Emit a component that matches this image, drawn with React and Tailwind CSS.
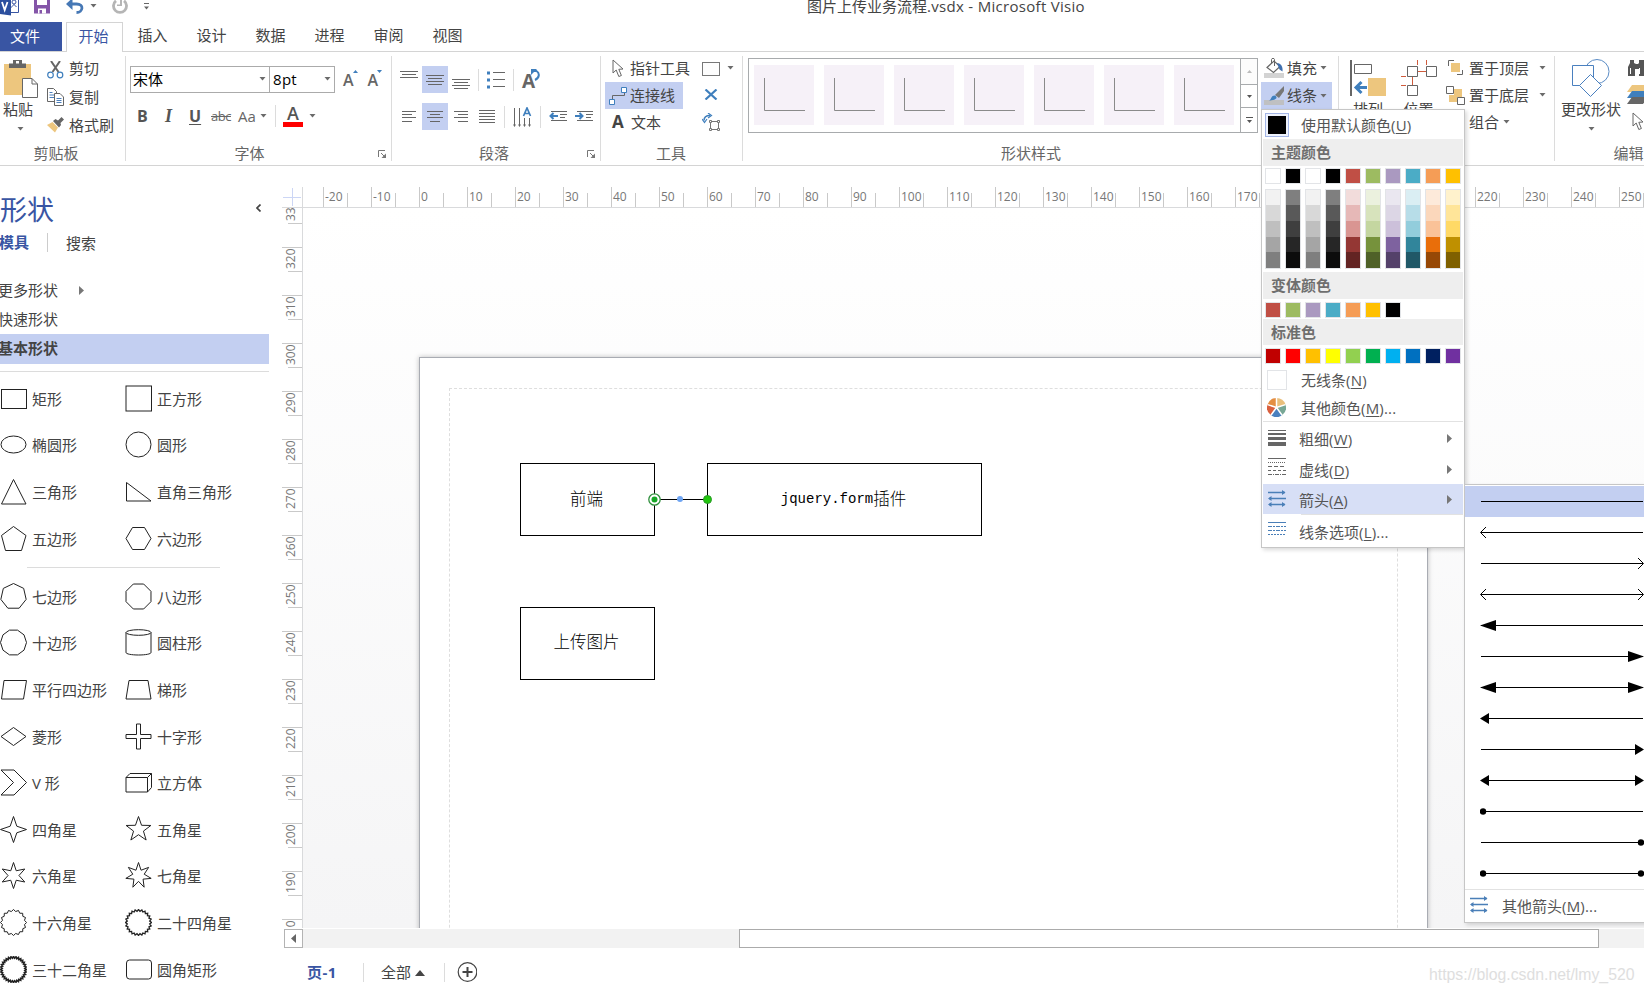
/**
 * App.jsx
 * Visio-style drawing window: ribbon, shapes pane, rulers, canvas and the line colour menu.
 */

const TABS = ['插入', '设计', '数据', '进程', '审阅', '视图'];

const THEME = ['#ffffff', '#000000', '#ffffff', '#000000', '#c04f45', '#9dbb61', '#aa99c0', '#4bacc6', '#f59d56', '#ffc000'];

const SHADES = [
  ['#f2f2f2', '#d8d8d8', '#bfbfbf', '#a5a5a5', '#7f7f7f'],
  ['#7f7f7f', '#595959', '#3f3f3f', '#262626', '#0c0c0c'],
  ['#f2f2f2', '#d8d8d8', '#bfbfbf', '#a5a5a5', '#7f7f7f'],
  ['#7f7f7f', '#595959', '#3f3f3f', '#262626', '#0c0c0c'],
  ['#f2dcdb', '#e6b8b7', '#d99592', '#943734', '#632423'],
  ['#ebf1de', '#d7e3bc', '#c4d6a0', '#76923c', '#4f6128'],
  ['#eae7f0', '#dcd6e5', '#ccc0da', '#7e629f', '#54416a'],
  ['#daeef3', '#b7dde8', '#92cddc', '#31859b', '#205867'],
  ['#fdeada', '#fbd7bb', '#fac298', '#e96e0a', '#974806'],
  ['#fff2cc', '#ffe599', '#ffd966', '#bf9000', '#7f6000'],
];

const VARIANT = ['#c04f45', '#9dbb61', '#aa99c0', '#4bacc6', '#f59d56', '#ffc000', '#000000'];

const STANDARD = ['#c00000', '#ff0000', '#ffc000', '#ffff00', '#92d050', '#00b050', '#00b0f0', '#0070c0', '#002060', '#7030a0'];

// start / end caps of every preset in the arrow submenu
const ARROWS = [
  ['', ''], ['open', ''], ['', 'open'], ['open', 'open'],
  ['long', ''], ['', 'long'], ['long', 'long'],
  ['short', ''], ['', 'short'], ['short', 'short'],
  ['dot', ''], ['', 'dot'], ['dot', 'dot'],
];

function ring(n, { r = 12.5, inner = 0, turn = 0 } = {}) {
  const count = inner ? n * 2 : n;
  return Array.from({ length: count }, (_, i) => {
    const a = (Math.PI * 2 * i) / count - Math.PI / 2 + (turn * Math.PI) / 180;
    const rad = inner && i % 2 ? r * inner : r;
    return `${(13.5 + rad * Math.cos(a)).toFixed(2)},${(13.5 + rad * Math.sin(a)).toFixed(2)}`;
  }).join(' ');
}

const SHAPES_TOP = [
  ['矩形', <rect x="1.5" y="4.5" width="25" height="19" />],
  ['正方形', <rect x="1" y="1" width="25.5" height="25" />],
  ['椭圆形', <ellipse cx="13.5" cy="13.5" rx="12.5" ry="8.5" />],
  ['圆形', <circle cx="13.5" cy="13.5" r="12.5" />],
  ['三角形', <path d="M13.5 1.5 26 26H1.5z" />],
  ['直角三角形', <path d="M1.5 4.5v18.5h24.5z" />],
  ['五边形', <path d="M13.5 1.5 26 10.5 21.5 25.5h-16L1.5 10.5z" />],
  ['六边形', <path d="M7.5 2.5h12L26 13.5l-6.5 11h-12L1 13.5z" />],
];

const SHAPES_BOTTOM = [
  ['七边形', <polygon points={ring(7, { r: 13 })} />],
  ['八边形', <polygon points={ring(8, { r: 13.5, turn: 22.5 })} />],
  ['十边形', <polygon points={ring(10, { r: 13, turn: 18 })} />],
  ['圆柱形', <><ellipse cx="13.5" cy="3.5" rx="12.5" ry="2.8" /><path d="M1 3.5v20c0 1.500 5.500 2.500 12.500 2.500S26 25 26 23.500v-20" /></>],
  ['平行四边形', <path d="M4 4.500h22.500l-3 18.500h-22z" />],
  ['梯形', <path d="M4 4.500h19L26 23H1z" />],
  ['菱形', <path d="M1 13.500 13.500 4.500 26 13.500 13.500 22.500z" />],
  ['十字形', <path d="M11.500 1h4v10.500H26v4H15.500V26h-4V15.500H1v-4h10.500z" />],
  ['V 形', <path d="M1 1h13l12.500 12.500L14 26H1l12.500-12.500z" />],
  ['立方体', <path d="M1 8.500h21.500v14.500H1zM1 8.500 5 4.500h21.500L22.500 8.500M26.500 4.500v14l-4 4.500" />],
  ['四角星', <polygon points={ring(4, { r: 13, inner: 0.36 })} />],
  ['五角星', <polygon points={ring(5, { r: 13, inner: 0.4 })} />],
  ['六角星', <polygon points={ring(6, { r: 13, inner: 0.42 })} />],
  ['七角星', <polygon points={ring(7, { r: 13, inner: 0.45 })} />],
  ['十六角星', <polygon points={ring(16, { r: 13, inner: 0.86 })} />],
  ['二十四角星', <polygon points={ring(24, { r: 13, inner: 0.87 })} strokeWidth="1.300" />],
  ['三十二角星', <polygon points={ring(32, { r: 13, inner: 0.87 })} strokeWidth="1.600" />],
  ['圆角矩形', <rect x="1.500" y="4" width="25" height="19" rx="3" />],
];

function Icon({ w, h, className = '', children }) {
  return (
    <svg width={w} height={h} viewBox={`0 0 ${w} ${h}`} fill="none" className={`shrink-0 ${className}`}>
      {children}
    </svg>
  );
}

function Caret({ className = '' }) {
  return <Icon w={7} h={4} className={className}><path d="M.5 0h6L3.500 3.500z" fill="#6b6b6b" /></Icon>;
}

function Cursor() {
  return (
    <Icon w={12} h={19}>
      <path d="M1 1v13l3.200-3 2.600 6.500 2.600-1L6.800 10.300 11 10z" fill="#fff" stroke="#666" />
    </Icon>
  );
}

// horizontal text-alignment glyphs: list of [x1, x2, y]
function Lines({ w, h, rows }) {
  return (
    <Icon w={w} h={h}>
      {rows.map(([a, b, y]) => <path key={y} d={`M${a} ${y + 0.5}H${b}`} stroke="#666" />)}
    </Icon>
  );
}

function Group({ label, width, launcher, last, children }) {
  return (
    <section className={`flex h-[105px] shrink-0 flex-col ${width} ${last ? '' : 'border-r border-[#dcdcdc]'}`}>
      <div className="flex h-[84px]">{children}</div>
      <div className="flex h-[21px] items-center pt-[5px] text-[#666]">
        <span className="flex-1 text-center">{label}</span>
        {launcher && (
          <Icon w={9} h={8} className="-ml-[9px] mr-1 mt-[2px]">
            <path d="M.5 7V.5H7" stroke="#777" />
            <path d="M3 3l4 4" stroke="#777" />
            <path d="M8 3.500V8H3.500z" fill="#777" />
          </Icon>
        )}
      </div>
    </section>
  );
}

function Sep() {
  return <div className="h-[22px] w-px shrink-0 bg-[#dcdcdc]" />;
}

function TitleBar() {
  return (
    <header className="flex h-[22px] shrink-0 items-start">
      <Icon w={20} h={16}>
        <path d="M9 0v12.500h9.500V0" stroke="#3955a3" />
        <path d="M10 8.500l4-4 2.500 2.500M14 4.500V2" stroke="#3955a3" />
        <circle cx="14" cy="2" r="2" stroke="#3955a3" fill="#fff" />
        <path d="M0 0h11v15.500L0 14z" fill="#2b4f9e" />
        <path d="M2 2l2.700 8L7.500 2" stroke="#fff" strokeWidth="1.800" />
      </Icon>
      <Icon w={16} h={14} className="ml-[14px]">
        <path d="M0 0h16v13.500H0z" fill="#8455a8" />
        <path d="M3 0h10v5H3zM4 8.500h8v5H4z" fill="#fff" />
        <path d="M5.500 10h2.500v3.500H5.500z" fill="#8455a8" />
      </Icon>
      <Icon w={18} h={14} className="ml-4">
        <path d="M3 4h7.500c8 0 6.500 8.500 0 8.500" stroke="#4678b5" strokeWidth="2.800" />
        <path d="M0 4 6.500-2v12z" fill="#4678b5" />
      </Icon>
      <Caret className="ml-[6px] mt-1" />
      <Icon w={16} h={14} className="ml-[15px]">
        <path d="M4 .8a6.500 6.500 0 1 0 8 0" stroke="#b5b5b5" strokeWidth="2.800" />
        <path d="M8 0h2v6H5V4.500h3z" fill="#b5b5b5" />
      </Icon>
      <Icon w={5} h={7} className="ml-4 mt-[3px]">
        <path d="M0 .5h5" stroke="#666" />
        <path d="M0 3.500h5L2.500 6.500z" fill="#666" />
      </Icon>
      <span className="-mt-[3px] ml-[658px] whitespace-nowrap">
        图片上传业务流程<span className="tracking-[0.300px]">.vsdx - Microsoft Visio</span>
      </span>
    </header>
  );
}

function TabStrip() {
  return (
    <nav className="flex h-[30px] shrink-0 border-b border-[#d4d4d4]">
      <div className="flex w-[62px] items-center bg-[#3955a3] pb-px pl-[10px] text-white">文件</div>
      <div className="-mb-px ml-1 flex w-[57px] items-center justify-center border border-b-0 border-[#d4d4d4] bg-white pb-[4px] pr-[2px] text-[#3955a3]">
        开始
      </div>
      {TABS.map(t => (
        <div key={t} className="flex w-[59px] items-center justify-center pb-[3px]">{t}</div>
      ))}
    </nav>
  );
}

function ClipboardGroup() {
  return (
    <Group label={<span className="mr-[13px]">剪贴板</span>} width="w-[126px]">
      <div className="flex w-[47px] flex-col">
        <Icon w={36} h={40} className="ml-[3px] mt-[3px]">
          <path d="M1 5h27v31H1z" fill="#edc67e" />
          <path d="M6 4.500h4V1h9v3.500h4V9H6z" fill="#666" />
          <path d="M13 2h3v2.500h-3z" fill="#fff" />
          <path d="M19.500 19.500h9.500l5.500 5.500v13.500h-15z" fill="#fff" stroke="#666" />
          <path d="M29 19.500V25h5.500" stroke="#666" />
        </Icon>
        <span className="ml-[3px] mt-[3px] leading-[15px]">粘贴</span>
        <Caret className="ml-[17px] mt-[10px]" />
      </div>
      <div className="flex flex-col">
        <div className="flex h-[27px] items-center gap-[5px]">
          <Icon w={17} h={18}>
            <path d="M4 0 11.500 11M13 0 5.500 11" stroke="#666" strokeWidth="2" />
            <circle cx="3.500" cy="14" r="2.800" stroke="#3f7fbd" strokeWidth="1.200" />
            <circle cx="13" cy="14" r="2.800" stroke="#3f7fbd" strokeWidth="1.200" />
          </Icon>
          <span className="-mt-[3px]">剪切</span>
        </div>
        <div className="flex h-[28px] items-center gap-[5px]">
          <Icon w={17} h={18}>
            <path d="M.5.5h6l3 3v10h-9z" fill="#fff" stroke="#666" />
            <path d="M2.500 4.500h3M2.500 7h5M2.500 9.500h5" stroke="#4a7ebb" />
            <path d="M7.500 5.500h5.500l3.500 3.500v8.500h-9z" fill="#fff" stroke="#666" />
            <path d="M9.500 10.500h5M9.500 12.500h5M9.500 14.500h5" stroke="#4a7ebb" />
          </Icon>
          <span className="-mt-px">复制</span>
        </div>
        <div className="flex h-[28px] items-center gap-[5px]">
          <Icon w={17} h={16}>
            <path d="M0 8l5.500-3L11 10.500 8 15.500z" fill="#edc67e" />
            <path d="M6 4l2.500-2 2.500 1.500L14.500 0 17 2.500 13.500 6l.5 2-2 2.500z" fill="#666" />
          </Icon>
          <span>格式刷</span>
        </div>
      </div>
    </Group>
  );
}

function FontGroup() {
  return (
    <Group label={<span className="mr-[14px]">字体</span>} width="w-[266px]" launcher>
      <div className="flex w-full flex-col">
        <div className="flex h-[37px] items-center pl-1 pt-[9px] text-black">
          <div className="flex h-[27px] w-[140px] items-center justify-between border border-[#ababab] pl-[2px] pr-[3px]">
            宋体<Caret />
          </div>
          <div className="-ml-px flex h-[27px] w-[66px] items-center justify-between border border-[#ababab] pl-[3px] pr-[3px]">
            <span className="tracking-[0.300px]">8pt</span><Caret />
          </div>
          <div className="ml-2 flex items-start text-[16px] font-semibold text-[#666]">
            <span className="pt-[2px] leading-[16px]">A</span>
            <Icon w={5} h={3} className="-ml-px"><path d="M0 3h5L2.500 0z" fill="#3f7fbd" /></Icon>
          </div>
          <div className="ml-[10px] flex items-start text-[16px] font-semibold text-[#666]">
            <span className="pt-[2px] leading-[16px]">A</span>
            <Icon w={5} h={3} className="-ml-px"><path d="M0 0h5L2.500 3z" fill="#3f7fbd" /></Icon>
          </div>
        </div>
        <div className="flex h-[46px] items-center text-[#555]">
          <b className="ml-[11px] w-[28px] text-[16px]">B</b>
          <b className="w-6 font-['Liberation_Serif',serif] text-[18px] italic">I</b>
          <b className="w-[22px] text-[16px] underline underline-offset-2">U</b>
          <span className="w-[27px] text-[13px] tracking-[-0.500px] text-[#666] line-through">abc</span>
          <span className="text-[#666]">Aa</span>
          <Caret className="ml-1" />
          <div className="ml-2"><Sep /></div>
          <div className="ml-[7px] flex w-5 flex-col items-center text-[18px] font-semibold">
            <span className="leading-[17px]">A</span>
            <div className="h-[5px] w-5 bg-[#f00]" />
          </div>
          <Caret className="ml-[6px]" />
        </div>
      </div>
    </Group>
  );
}

function ParagraphGroup() {
  return (
    <Group label="段落" width="w-[209px]" launcher>
      <div className="flex w-full flex-col pl-1 pt-[10px]">
        <div className="flex h-[27px] items-center">
          <div className="flex w-[26px] justify-center pb-[11px]"><Lines w={18} h={7} rows={[[0, 18, 0], [2, 16, 3], [0, 18, 6]]} /></div>
          <div className="flex h-[27px] w-[26px] items-center justify-center bg-[#c3cff1]">
            <Lines w={18} h={10} rows={[[0, 18, 0], [2, 16, 3], [0, 18, 6], [2, 16, 9]]} />
          </div>
          <div className="flex w-[26px] justify-center pt-[8px]"><Lines w={18} h={10} rows={[[0, 18, 0], [2, 16, 3], [0, 18, 6], [2, 16, 9]]} /></div>
          <div className="ml-1"><Sep /></div>
          <Icon w={18} h={18} className="ml-2">
            <path d="M0 .500h3v3H0zM0 7.500h3v3H0zM0 14.500h3v3H0z" fill="#3f7fbd" />
            <path d="M6 1.500h12M6 8.500h12M6 15.500h12" stroke="#666" />
          </Icon>
          <div className="ml-2"><Sep /></div>
          <div className="ml-2 flex items-start">
            <b className="pt-[4px] text-[19px] leading-[17px] text-[#666]">A</b>
            <Icon w={9} h={12} className="-ml-[4px]">
              <path d="M2 2h3.500C9 4 8.500 9 4 11" stroke="#3f7fbd" strokeWidth="2" />
              <path d="M0 0h6L0 6z" fill="#3f7fbd" />
            </Icon>
          </div>
        </div>
        <div className="mt-[10px] flex h-[27px] items-center">
          <div className="flex w-[26px] justify-center"><Lines w={14} h={11} rows={[[0, 14, 0], [0, 10, 3], [0, 14, 6], [0, 10, 10]]} /></div>
          <div className="flex h-[27px] w-[26px] items-center justify-center bg-[#c3cff1]">
            <Lines w={16} h={11} rows={[[0, 16, 0], [3, 13, 3], [0, 16, 6], [3, 13, 10]]} />
          </div>
          <div className="flex w-[26px] justify-center"><Lines w={14} h={11} rows={[[0, 14, 0], [4, 14, 3], [0, 14, 6], [4, 14, 10]]} /></div>
          <div className="flex w-[26px] justify-center"><Lines w={16} h={13} rows={[[0, 16, 0], [0, 16, 3], [0, 16, 6], [0, 16, 9], [0, 16, 12]]} /></div>
          <div className="ml-1"><Sep /></div>
          <Icon w={19} h={20} className="ml-2">
            <path d="M1.500 1v18M6.500 1v18M11.500 11v8M16.500 11v8" stroke="#666" />
            <path d="M0 17.500h3L1.500 20zM5 17.500h3L6.500 20zM10 17.500h3L11.500 20zM15 17.500h3L16.500 20z" fill="#666" />
            <path d="M10.500 9 14 1l3.500 8M12 6.500h4" stroke="#3f7fbd" strokeWidth="1.700" />
          </Icon>
          <div className="ml-2"><Sep /></div>
          <Icon w={18} h={11} className="ml-2">
            <path d="M2 .500h16M11 3.500h7M11 6.500h5M2 9.500h16" stroke="#666" />
            <path d="M1 5h8" stroke="#3f7fbd" strokeWidth="2" />
            <path d="M4.500 2 1.500 5l3 3" stroke="#3f7fbd" strokeWidth="2" />
          </Icon>
          <Icon w={18} h={11} className="ml-2">
            <path d="M2 .500h16M11 3.500h7M11 6.500h5M2 9.500h16" stroke="#666" />
            <path d="M0 5h8" stroke="#3f7fbd" strokeWidth="2" />
            <path d="M4.500 2 7.500 5l-3 3" stroke="#3f7fbd" strokeWidth="2" />
          </Icon>
        </div>
      </div>
    </Group>
  );
}

function ToolsGroup() {
  return (
    <Group label={<span className="mr-px">工具</span>} width="w-[142px]">
      <div className="-mt-px ml-1 flex w-[78px] flex-col whitespace-nowrap">
        <div className="flex h-[27px] items-center gap-[6px] pl-[7px]"><Cursor /><span className="-mt-[2px]">指针工具</span></div>
        <div className="flex h-[27px] items-center gap-[3px] bg-[#c3cff1] pl-1">
          <Icon w={18} h={18}>
            <path d="M3.500 12V8.500h12V5" stroke="#666" />
            <path d="M12.500.5h5v5h-5zM.5 12.500h5v5h-5z" fill="#fff" stroke="#3f7fbd" />
          </Icon>
          <span className="-mt-[2px]">连接线</span>
        </div>
        <div className="flex h-[27px] items-center pb-[2px] pl-[7px]">
          <b className="w-[19px] text-[17px]">A</b>文本
        </div>
      </div>
      <div className="-mt-px flex w-[50px] flex-col pl-[19px]">
        <div className="flex h-[27px] items-center">
          <Icon w={18} h={14}><rect x=".5" y=".5" width="17" height="13" fill="#fdfdfd" stroke="#777" /></Icon>
          <Caret className="-mt-[2px] ml-[7px]" />
        </div>
        <div className="flex h-[27px] items-center pb-[2px] pl-[2px]">
          <Icon w={14} h={11}><path d="M1.500.5 12.500 10.500M12.500.5 1.500 10.500" stroke="#3f7fbd" strokeWidth="2.200" /></Icon>
        </div>
        <div className="flex h-[27px] items-center pb-[2px]">
          <Icon w={18} h={18}>
            <path d="M2 7.500C2 4.500 4 2.500 8 2.500" stroke="#3f7fbd" strokeWidth="1.500" />
            <path d="M6 0l3.500 2.500L6 5M0 6l2.500 3.500L5 6" stroke="#3f7fbd" strokeWidth="1.200" />
            <path d="M8.500 8.500h8v8h-8z" stroke="#777" />
            <path d="M7.500 7.500h2v2h-2zM15.500 7.500h2v2h-2zM7.500 15.500h2v2h-2zM15.500 15.500h2v2h-2z" fill="#fff" stroke="#777" />
          </Icon>
        </div>
      </div>
    </Group>
  );
}

function StylesGroup() {
  return (
    <Group label={<span className="mr-[19px]">形状样式</span>} width="w-[596px]">
      <div className="ml-[5px] mt-[2px] flex h-[75px] w-[510px] border border-[#a8abad]">
        <div className="flex flex-1 gap-[10px] pl-[5px] pt-[6px]">
          {Array.from({ length: 7 }, (_, i) => (
            <div key={i} className="h-[60px] w-[60px] bg-[#f6f1f8] pl-[10px] pt-[13px]">
              <Icon w={41} h={33}><path d="M.5 0v32.500H41" stroke="#8a8a8a" /></Icon>
            </div>
          ))}
        </div>
        <div className="flex w-[17px] flex-col border-l border-[#a8abad]">
          <div className="flex h-[25px] items-center justify-center bg-[#fcfcfc]">
            <Icon w={5} h={3}><path d="M0 3h5L2.500 0z" fill="#bbb" /></Icon>
          </div>
          <div className="flex h-[24px] items-center justify-center border-y border-[#a8abad]">
            <Icon w={5} h={3}><path d="M0 0h5L2.500 3z" fill="#555" /></Icon>
          </div>
          <div className="flex h-[24px] items-center justify-center">
            <Icon w={7} h={7}><path d="M0 .5h7" stroke="#555" /><path d="M1 3h5L3.500 6z" fill="#555" /></Icon>
          </div>
        </div>
      </div>
      <div className="-mt-px ml-[3px] flex w-[71px] flex-col">
        <div className="flex h-[27px] items-center pb-px pl-[3px]">
          <Icon w={20} h={20}>
            <path d="M0 15h20v5H0z" fill="#d3d3d3" />
            <path d="M3 9.500 10 3l6 5.500-6.500 6z" fill="#fff" stroke="#666" strokeWidth="1.200" />
            <path d="M7.500 6V1.500c0-1.500 3-1.500 3 0V8" stroke="#666" />
            <path d="M13 5c4 0 6 4 5.500 8.500l-3-2z" fill="#3f6fae" />
          </Icon>
          <span className="-mt-px ml-[3px]">填充</span><Caret className="ml-[3px]" />
        </div>
        <div className="flex h-[27px] items-center bg-[#c3cff1] pl-[3px]">
          <Icon w={20} h={19}>
            <path d="M0 14h20v5H0z" fill="#bfc0c2" />
            <path d="M20 0v5l-5 7-4-3z" fill="#777" />
            <path d="M4 14.500c4 0 2.500-5 6.500-5 3 1 4 5-6.500 5z" fill="#3f7fbd" />
          </Icon>
          <span className="-mt-[2px] ml-[3px]">线条</span><Caret className="ml-[3px]" />
        </div>
      </div>
    </Group>
  );
}

function ArrangeGroup() {
  return (
    <Group label="" width="w-[216px]">
      <div className="flex w-[50px] flex-col items-center pt-1">
        <Icon w={36} h={37} className="mr-[-8px]">
          <path d="M1 0v36" stroke="#666" strokeWidth="2" />
          <path d="M4.500 4.500h17v9h-17z" stroke="#666" />
          <path d="M18 18h18v18H18z" fill="#edc67e" />
          <path d="M6 27.500h11" stroke="#3f7fbd" strokeWidth="3" />
          <path d="M11.500 22 6 27.500 11.500 33" stroke="#3f7fbd" strokeWidth="3" />
        </Icon>
        <span className="mr-[-8px] mt-[5px] leading-[15px]">排列</span>
      </div>
      <div className="flex w-[57px] flex-col items-center pt-1">
        <Icon w={36} h={37} className="mr-[-2px]">
          <path d="M16.500 0v5M25.500 0v5M16 11.500h10M0 16.500h5M0 25.500h5M11.500 17v9" stroke="#cf5b3c" />
          <path d="M6.500 6.500h10v10h-10zM25.500 6.500h10v10h-10zM6.500 25.500h10v10h-10z" fill="#fff" stroke="#666" />
        </Icon>
        <span className="mr-[-2px] mt-[5px] leading-[15px]">位置</span>
      </div>
      <div className="-mt-px flex flex-col">
        <div className="flex h-[27px] items-center pb-[2px]">
          <Icon w={19} h={16} className="ml-[2px]">
            <path d="M3 3h9v9H3z" fill="#edc67e" />
            <path d="M.5 6V.5H6M14.500 10v4.500H9" stroke="#666" />
          </Icon>
          <span className="ml-[2px] w-[70px]">置于顶层</span><Caret />
        </div>
        <div className="flex h-[27px] items-center">
          <Icon w={19} h={19}>
            <path d="M8 3h8v8H8zM3 9h8v7H3z" fill="#edc67e" />
            <path d="M.5.500h7v7h-7zM11.500 11.500h7v7h-7z" fill="#fff" stroke="#666" />
          </Icon>
          <span className="-mt-[2px] ml-1 w-[70px]">置于底层</span><Caret className="-mt-[2px]" />
        </div>
        <div className="flex h-[27px] items-center pb-[2px] pl-[23px]">
          组合<Caret className="ml-1" />
        </div>
      </div>
    </Group>
  );
}

function EditGroup() {
  return (
    <Group label={<span className="-mr-[58px]">编辑</span>} width="w-[89px]" last>
      <div className="flex w-[72px] shrink-0 flex-col items-center">
        <Icon w={38} h={38} className="mt-[3px]">
          <circle cx="25" cy="12.500" r="12" stroke="#5b8cc5" />
          <path d="M.5 6.500h21v20H.5z" fill="#fff" stroke="#4a80bf" />
          <path d="M18.500 15.500 29.500 26.500 18.500 37.500 7.500 26.500z" fill="#fff" stroke="#4a80bf" />
        </Icon>
        <span className="mt-[5px] whitespace-nowrap leading-[15px]">更改形状</span>
        <Caret className="mt-[10px]" />
      </div>
      <div className="flex flex-col">
        <Icon w={17} h={17} className="ml-[1px] mt-[3px]">
          <path d="M2 1h4v3l2 1h2l1-1V1h5v4l3 4v8h-8v-7H7v7H0V8l2-4z" fill="#555" />
          <path d="M2.500 9v6M11.500 9v6" stroke="#fff" />
        </Icon>
        <Icon w={18} h={20} className="mt-[9px]">
          <path d="M5 0h16l-5 7H0z" fill="#edc67e" />
          <path d="M5 6h16l-5 7H0z" fill="#3f7fbd" />
          <path d="M5 12h16l-5 7H0z" fill="#666" />
        </Icon>
        <div className="ml-[5px] mt-[7px]"><Cursor /></div>
      </div>
    </Group>
  );
}

function ShapeRow({ items }) {
  return (
    <div className="grid grid-cols-[125px_125px] auto-rows-[46.600px]">
      {items.map(([name, drawing]) => (
        <div key={name} className="flex items-center gap-[5px] whitespace-nowrap">
          <Icon w={27} h={27} className="stroke-[#222]">{drawing}</Icon>
          <span className="pt-px">{name}</span>
        </div>
      ))}
    </div>
  );
}

function ShapesPane() {
  return (
    <aside className="flex w-[282px] shrink-0 flex-col">
      <div className="mt-[28px] flex h-8 w-[261px] items-center justify-between">
        <h2 className="text-[27px] leading-8 text-[#3955a3]">形状</h2>
        <Icon w={5} h={8} className="mb-[5px]"><path d="M4.500 0.500 1 4l3.500 3.500" stroke="#444" strokeWidth="1.700" /></Icon>
      </div>
      <div className="mt-[5px] flex h-[23px] items-center">
        <b className="-ml-px -mt-[2px] w-12 font-semibold text-[#3955a3]">模具</b>
        <div className="h-[19px] w-px bg-[#ccc]" />
        <span className="ml-[18px]">搜索</span>
      </div>
      <div className="mt-[21px] flex h-[30px] items-center">
        <span className="-ml-[2px] w-[81px]">更多形状</span>
        <Icon w={5} h={9}><path d="M0 0v9l5-4.500z" fill="#777" /></Icon>
      </div>
      <div className="-ml-[2px] flex h-[29px] items-center pb-[2px]">快速形状</div>
      <div className="flex h-[30px] w-[269px] items-center bg-[#c3cff1] pb-[2px] font-semibold"><span className="-ml-[2px]">基本形状</span></div>
      <div className="mb-[3px] mt-[7px] h-px w-[269px] bg-[#dcdcdc]" />
      <ShapeRow items={SHAPES_TOP} />
      <div className="ml-[27px] mt-[5.600px] h-px w-[193px] shrink-0 bg-[#dcdcdc]" />
      <div className="mt-[5px]"><ShapeRow items={SHAPES_BOTTOM} /></div>
    </aside>
  );
}

function HRuler() {
  return (
    <div className="flex h-[21px] flex-1 overflow-hidden border-b border-[#d9dadc] pl-5">
      {Array.from({ length: 28 }, (_, i) => (
        <div key={i} className="flex h-5 w-12 shrink-0">
          <div className="h-5 w-6 border-l border-[#c9c9c9] pl-px text-[12px] leading-[19px] text-[#777]">{(i - 2) * 10}</div>
          <div className="h-[14px] w-6 self-end border-l border-[#c9c9c9]" />
        </div>
      ))}
    </div>
  );
}

function VRuler() {
  return (
    <div className="flex w-[21px] shrink-0 flex-col overflow-hidden border-r border-[#d9dadc]">
      <div className="-mt-[9px]">
        {Array.from({ length: 16 }, (_, i) => (
          <div key={i} className="flex h-12 flex-col">
            <div className="h-6 border-t border-[#c9c9c9]">
              <span className="block h-[21px] w-[17px] rotate-180 text-[12px] leading-[17px] text-[#777] [writing-mode:vertical-rl]">{330 - i * 10}</span>
            </div>
            <div className="ml-[6px] h-6 border-t border-[#c9c9c9]" />
          </div>
        ))}
      </div>
    </div>
  );
}

function Canvas() {
  return (
    <div className="relative flex-1 overflow-hidden bg-linear-to-b from-white to-[#f5f5f6]">
      <div className="absolute left-[116px] top-[149px] h-[620px] w-[1009px] border border-[#a9acb3] bg-white shadow-[0_0_5px_rgba(0,0,0,0.25)]">
        <div className="ml-[29px] mt-[30px] h-[620px] w-[949px] border border-dashed border-[#dedede]" />
      </div>
      <div className="absolute left-[217px] top-[255px] flex h-[73px] w-[135px] items-center justify-center border border-black pb-px pr-[2px] text-[16.500px] font-light text-black">
        前端
      </div>
      <div className="absolute left-[404px] top-[255px] flex h-[73px] w-[275px] items-center justify-center border border-black pb-px pr-[2px] text-black">
        <span className="font-['Liberation_Mono',monospace] text-[14px]">jquery.form</span>
        <span className="text-[16.500px] font-light">插件</span>
      </div>
      <div className="absolute left-[217px] top-[399px] flex h-[73px] w-[135px] items-center justify-center border border-black pb-[3px] pr-[2px] text-[16.500px] font-light text-black">
        上传图片
      </div>
      <svg width="70" height="14" viewBox="0 0 70 14" fill="none" className="absolute left-[344px] top-[284px]">
        <path d="M13 7.500h48" stroke="#000" strokeWidth="1.200" />
        <circle cx="7.500" cy="7.500" r="5.700" fill="#fff" stroke="#2f8f3c" strokeWidth="1.300" />
        <circle cx="7.500" cy="7.500" r="3" fill="#17a827" />
        <circle cx="33" cy="7" r="3" fill="#6ea4f2" />
        <circle cx="60.500" cy="7.500" r="4" fill="#22c70d" stroke="#2b9a2b" />
      </svg>
    </div>
  );
}

function BottomBar() {
  return (
    <div className="flex h-[65px] shrink-0 flex-col pt-px">
      <div className="flex h-[19px] bg-[#f2f2f2]">
        <div className="w-[2px] bg-white" />
        <div className="flex h-[19px] w-[19px] items-center justify-center border border-[#b3b3b3] bg-white">
          <Icon w={5} h={9}><path d="M5 0v9L0 4.500z" fill="#666" /></Icon>
        </div>
        <div className="ml-[436px] h-[19px] w-[860px] border border-[#ababab] bg-white" />
      </div>
      <div className="flex h-[45px] items-center pl-[25px] pt-[3px]">
        <b className="w-[56px] tracking-[0.400px] text-[#3955a3]">页-1</b>
        <div className="h-[19px] w-px bg-[#dcdcdc]" />
        <span className="ml-[17px]">全部</span>
        <Icon w={10} h={6} className="ml-1 mt-[2px]"><path d="M0 6h10L5 0z" fill="#444" /></Icon>
        <div className="ml-[19px] h-[19px] w-px bg-[#dcdcdc]" />
        <Icon w={20} h={20} className="ml-3">
          <circle cx="10.500" cy="10" r="9.300" stroke="#444" strokeWidth="1.200" />
          <path d="M10.500 5v10M5.500 10h10" stroke="#444" strokeWidth="2" />
        </Icon>
      </div>
    </div>
  );
}

function Swatches({ colors, className = 'py-[2px]' }) {
  return (
    <div className={`flex gap-1 px-[3px] ${className}`}>
      {colors.map((c, i) => (
        <div key={i} className="h-4 w-4 border border-[#e2e4e7]" style={{ backgroundColor: c }} />
      ))}
    </div>
  );
}

function MenuHeading({ children }) {
  return <div className="mx-px flex h-[27px] items-center bg-[#eee] pl-2 font-semibold text-[#6e6e6e]">{children}</div>;
}

function MenuItem({ icon, label, hotkey, tail = '', arrow, className }) {
  return (
    <div className={`mx-px flex items-center ${className}`}>
      <div className="flex w-9 shrink-0 pl-[5px]">{icon}</div>
      <span className="pt-px">{label}<span className="tracking-[0.200px]">(<u className="underline-offset-2">{hotkey}</u>){tail}</span></span>
      {arrow && <Icon w={5} h={9} className="ml-auto mr-[11px]"><path d="M0 0v9l5-4.500z" fill="#777" /></Icon>}
    </div>
  );
}

function ArrowsIcon({ className }) {
  return (
    <Icon w={20} h={18} className={className}>
      <path d="M1 3.500h17M2 9.500h17M2 15.500h16" stroke="#4a7fb8" strokeWidth="1.300" />
      <path d="M15 1l3.500 2.500L15 6zM4.500 7 1 9.500 4.500 12zM4.500 13 1 15.500 4.500 18zM15 13l3.500 2.500L15 18z" fill="#4a7fb8" />
    </Icon>
  );
}

function LineMenu() {
  return (
    <div className="absolute left-[1261px] top-[109px] flex h-[439px] w-[204px] flex-col border border-[#c6c6c6] bg-white text-[#555] shadow-[2px_2px_4px_rgba(0,0,0,0.15)]">
      <div className="flex h-[29px] items-center pl-[3px] pt-px">
        <div className="mr-3 h-6 w-6 border border-[#a3b5e5] bg-[#eef2fc] p-[2px]"><div className="h-[18px] w-[18px] bg-black" /></div>
        <span>使用默认颜色<span className="tracking-[0.200px]">(<u className="underline-offset-2">U</u>)</span></span>
      </div>
      <MenuHeading>主题颜色</MenuHeading>
      <Swatches colors={THEME} />
      <div className="flex h-[86px] gap-1 px-[3px] pt-[3px]">
        {SHADES.map((col, i) => (
          <div key={i} className="flex h-20 w-4 flex-col border border-[#e2e4e7]">
            {col.map(c => <div key={c} className="flex-1" style={{ backgroundColor: c }} />)}
          </div>
        ))}
      </div>
      <MenuHeading>变体颜色</MenuHeading>
      <Swatches colors={VARIANT} className="pb-px pt-[3px]" />
      <MenuHeading>标准色</MenuHeading>
      <Swatches colors={STANDARD} className="pb-px pt-[3px]" />
      <MenuItem
        className="h-[29px] gap-[2px]" label="无线条" hotkey="N"
        icon={<div className="-ml-px h-5 w-5 border border-[#e2e4e7]" />}
      />
      <MenuItem
        className="h-[27px] gap-[2px]" label="其他颜色" hotkey="M" tail="..."
        icon={(
          <Icon w={19} h={19} className="-ml-px">
            <path d="M9.500 9.500V0A9.500 9.500 0 0 1 18.500 6.600z" fill="#e9bf7c" />
            <path d="M9.500 9.500 18.500 6.600A9.500 9.500 0 0 1 15.100 17.200z" fill="#78a795" />
            <path d="M9.500 9.500 15.100 17.200A9.500 9.500 0 0 1 3.900 17.200z" fill="#4a80bf" />
            <path d="M9.500 9.500 3.900 17.200A9.500 9.500 0 0 1 .5 6.600z" fill="#d9603f" />
            <path d="M9.500 9.500 .5 6.600A9.500 9.500 0 0 1 9.500 0z" fill="#e48e42" />
            <path d="M9.500 9.500V0M9.500 9.500 18.500 6.600M9.500 9.500 15.100 17.200M9.500 9.500 3.900 17.200M9.500 9.500 .5 6.600" stroke="#fff" strokeWidth="1.500" />
          </Icon>
        )}
      />
      <div className="mx-px h-px bg-[#e2e2e2]" />
      <MenuItem
        className="h-[32px]" label="粗细" hotkey="W" arrow
        icon={(
          <Icon w={18} h={17}><path d="M0 0h18v1H0zM0 3h18v2H0zM0 7h18v3H0zM0 12h18v4H0z" fill="#666" /></Icon>
        )}
      />
      <MenuItem
        className="h-[30px]" label="虚线" hotkey="D" arrow
        icon={(
          <Icon w={18} h={19} className="mb-1">
            <path d="M0 .5h18" stroke="#666" />
            <path d="M0 4.500h18" stroke="#666" strokeDasharray="1 1" />
            <path d="M0 8.500h18" stroke="#666" strokeDasharray="4 2" />
            <path d="M0 12.500h18" stroke="#666" strokeDasharray="3 2" />
            <path d="M0 16.500h18" stroke="#666" strokeDasharray="4 1 1 1" />
          </Icon>
        )}
      />
      <MenuItem className="h-[30px] bg-[#d7dff6]" label="箭头" hotkey="A" arrow icon={<ArrowsIcon className="-ml-px mb-[2px]" />} />
      <div className="ml-[39px] mr-px h-px bg-[#e2e2e2]" />
      <MenuItem
        className="h-[32px]" label="线条选项" hotkey="L" tail="..."
        icon={(
          <Icon w={18} h={14} className="mb-1">
            <path d="M0 .5h18" stroke="#4a7fb8" />
            <path d="M0 4.500h18M0 8.500h18" stroke="#4a7fb8" strokeDasharray="4 1 2 1" />
            <path d="M0 12.500h18" stroke="#4a7fb8" strokeDasharray="2 1" />
          </Icon>
        )}
      />
    </div>
  );
}

// caps are drawn pointing left; the right-hand ones are mirrored
function Cap({ type, flip }) {
  const t = flip ? 'translate(164 0) scale(-1 1)' : undefined;
  if (type === 'open') return <path transform={t} d="M6 10 .5 15.500 6 21" stroke="#000" />;
  if (type === 'long') return <path transform={t} d="M0 15.500 16 10v11z" fill="#000" />;
  if (type === 'short') return <path transform={t} d="M0 15.500 9 10v11z" fill="#000" />;
  if (type === 'dot') return <circle transform={t} cx="3" cy="15.500" r="3.200" fill="#000" />;
  return null;
}

function ArrowMenu() {
  return (
    <div className="absolute left-[1464px] top-[484px] flex h-[439px] w-[200px] flex-col border border-[#c6c6c6] bg-white pt-px text-[#555] shadow-[2px_2px_4px_rgba(0,0,0,0.15)]">
      {ARROWS.map(([a, b], i) => (
        <div key={i} className={`flex h-[31px] pl-[15px] ${i === 0 ? 'bg-[#c3cff1]' : ''}`}>
          <Icon w={164} h={31}>
            <path d="M1 15.500h162" stroke="#000" />
            <Cap type={a} />
            <Cap type={b} flip />
          </Icon>
        </div>
      ))}
      <div className="h-px bg-[#e2e2e2]" />
      <MenuItem className="flex-1 pb-[2px]" label="其他箭头" hotkey="M" tail="..." icon={<ArrowsIcon className="-ml-[2px] mb-[2px]" />} />
    </div>
  );
}

export default function App() {
  return (
    <div className="relative flex h-[993px] w-[1644px] flex-col overflow-hidden bg-white font-['Open_Sans','Noto_Sans_CJK_SC',sans-serif] text-[15px] leading-[18px] text-[#444]">
      <TitleBar />
      <TabStrip />
      <div className="flex h-[114px] shrink-0 border-b border-[#d4d4d4] pt-1">
        <ClipboardGroup />
        <FontGroup />
        <ParagraphGroup />
        <ToolsGroup />
        <StylesGroup />
        <ArrangeGroup />
        <EditGroup />
      </div>

      <main className="flex min-h-0 flex-1">
        <ShapesPane />
        <div className="flex min-w-0 flex-1 flex-col pt-[21px]">
          <div className="flex shrink-0">
            <div className="h-[21px] w-[21px] shrink-0 border-b border-r border-[#d9dadc]">
              <Icon w={20} h={20}><path d="M10.500 1v18M1 10.500h18" stroke="#ccd6f5" /></Icon>
            </div>
            <HRuler />
          </div>
          <div className="flex min-h-0 flex-1">
            <VRuler />
            <Canvas />
          </div>
          <BottomBar />
        </div>
      </main>

      <LineMenu />
      <ArrowMenu />
      <div className="absolute left-[1429px] top-[966px] font-['Liberation_Sans',sans-serif] text-[15.800px] text-[#dedede]">
        https://blog.csdn.net/lmy_520
      </div>
    </div>
  );
}
